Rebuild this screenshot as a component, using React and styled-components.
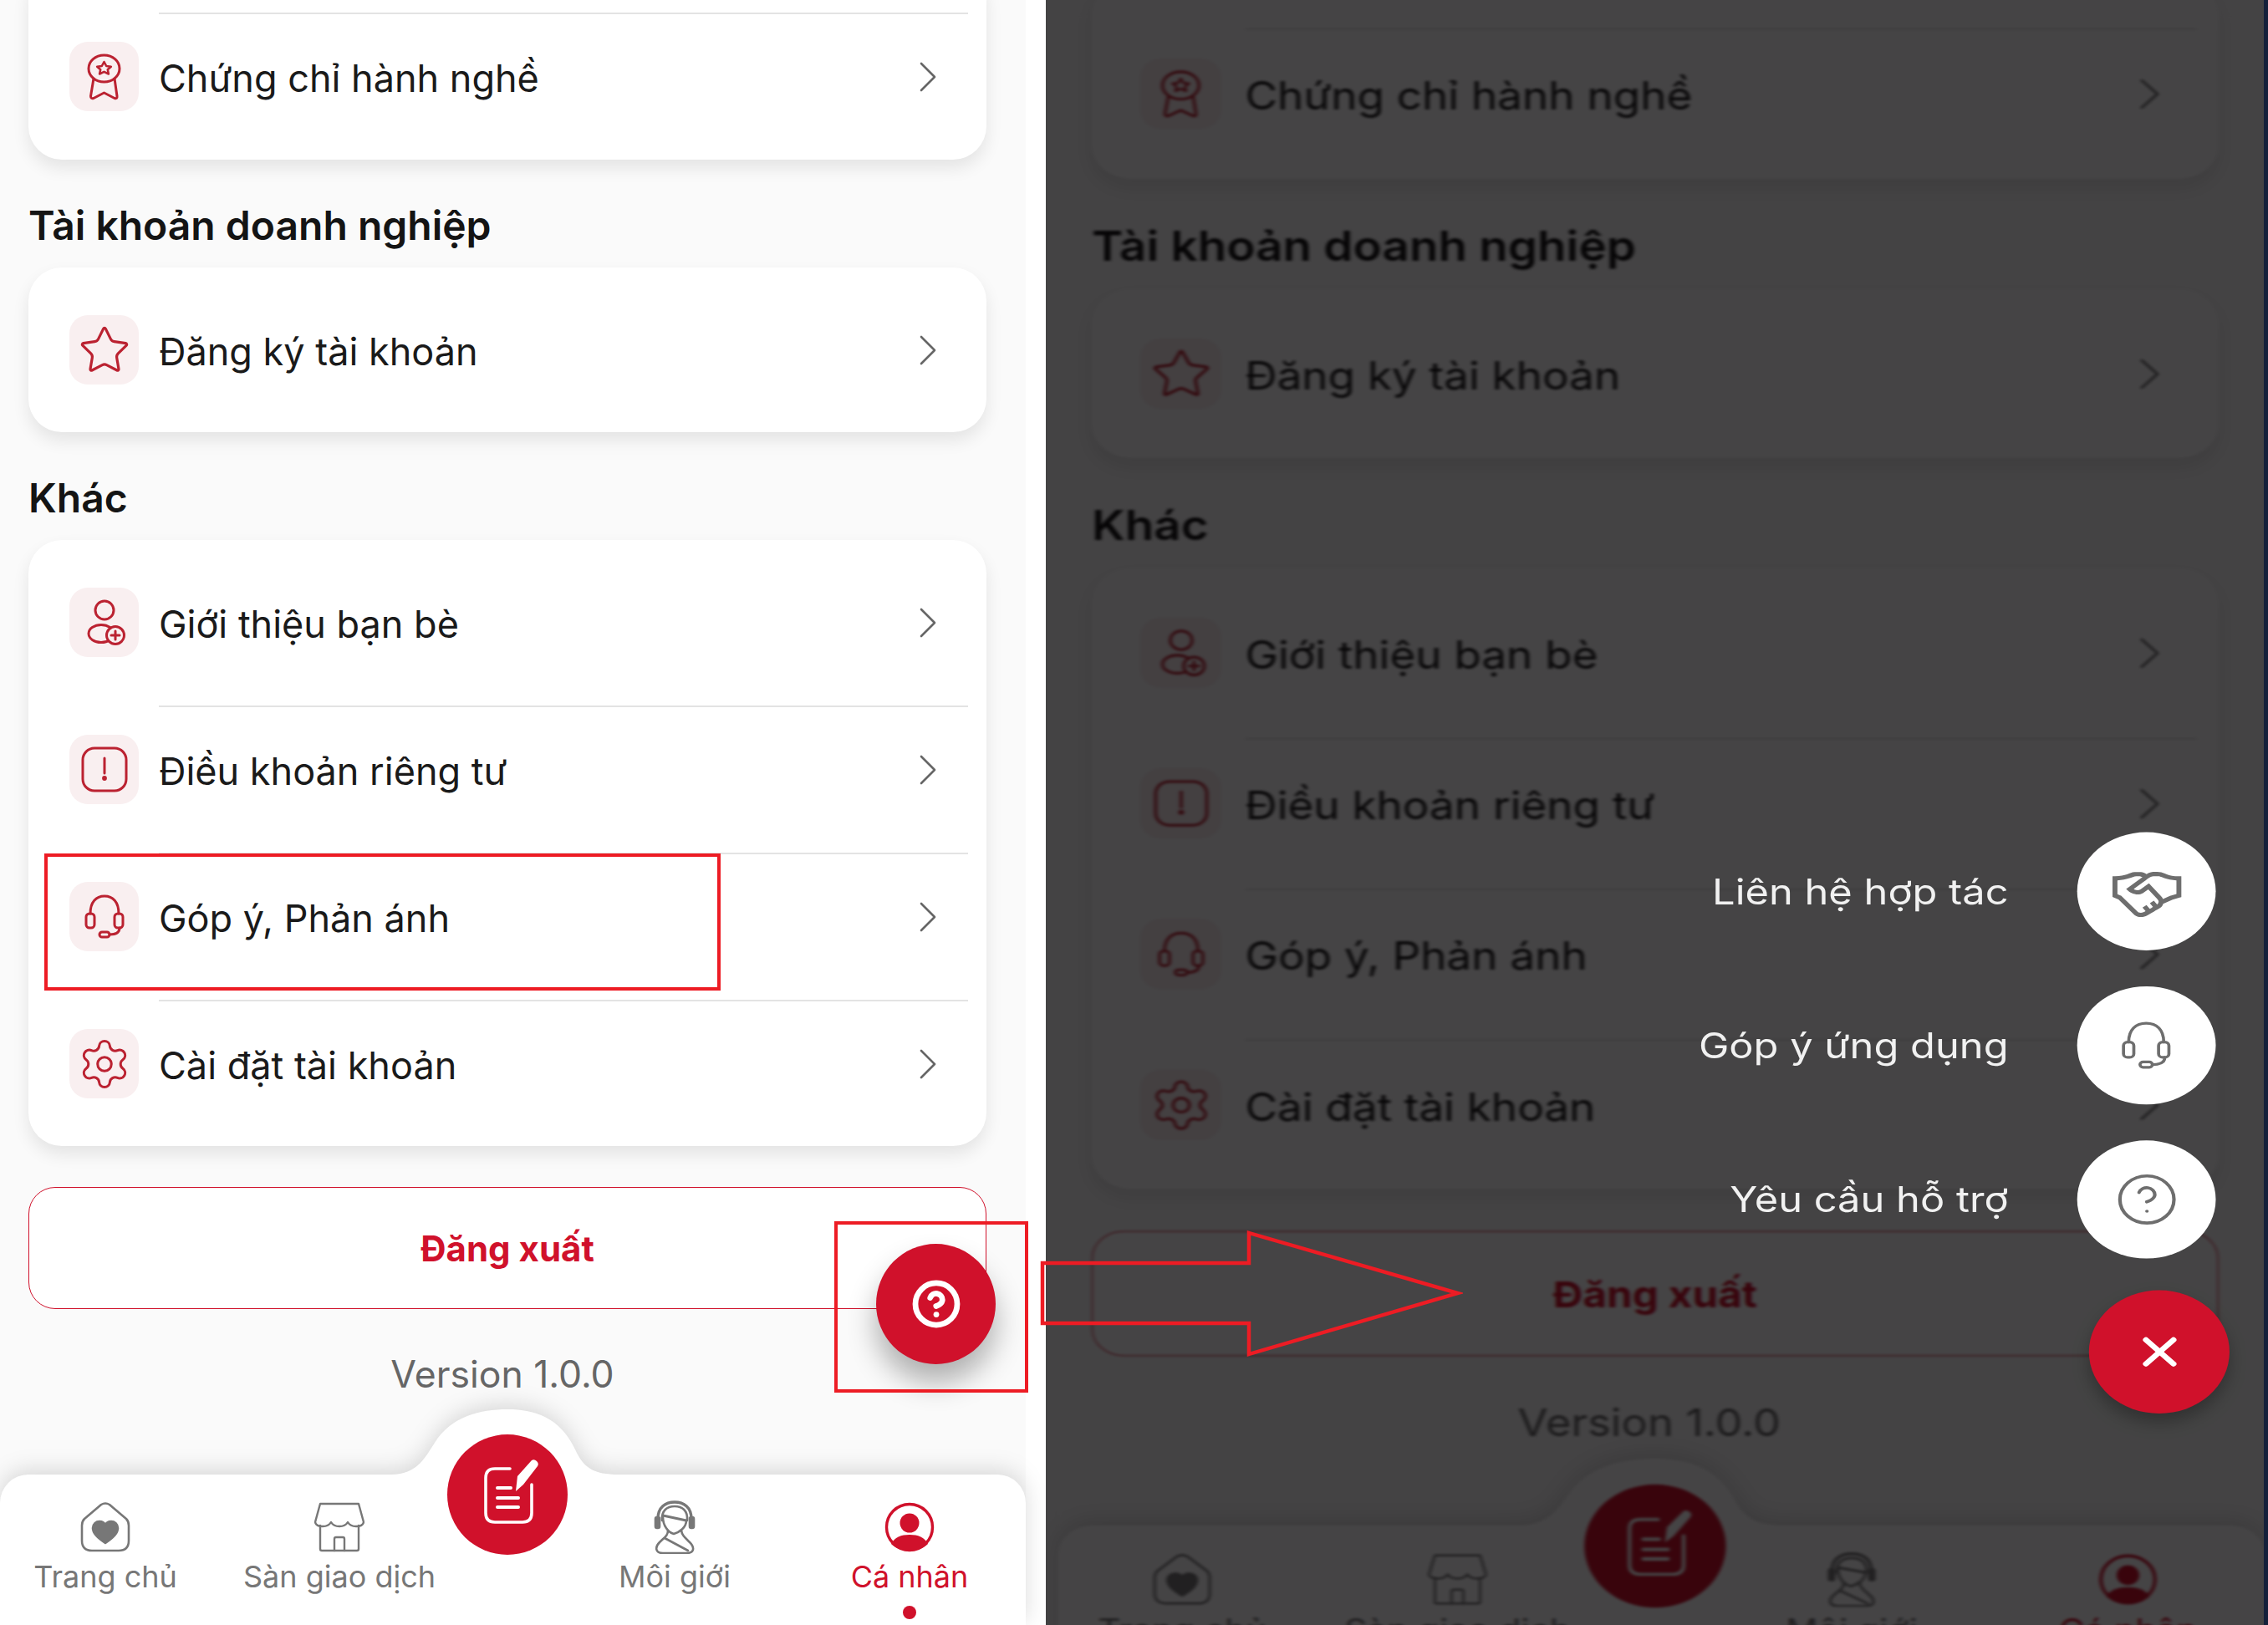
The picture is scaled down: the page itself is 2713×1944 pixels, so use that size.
import React from 'react';
import styled, { createGlobalStyle } from 'styled-components';
import { Settings, Star, CircleHelp, X } from 'lucide-react';
import { LiaHandshake } from 'react-icons/lia';

const RED = '#d0112b';
const ICON_RED = '#bb2231';
const NOTE_RED = '#ed1c24';

const GlobalStyle = createGlobalStyle`
  html, body {
    margin: 0;
    padding: 0;
    width: 2713px;
    height: 1944px;
    overflow: hidden;
    background: #fff;
    font-family: Inter, "Noto Sans", "Liberation Sans", sans-serif;
  }
`;

const Shell = styled.div`
  position: relative;
  display: flex;
  width: 2713px;
  height: 1944px;
`;

const LeftPanel = styled.div`
  width: 1251px;
  height: 1944px;
  overflow: hidden;
  background: #fff;
`;

const RightPanel = styled.div`
  position: relative;
  flex: 1;
  height: 1944px;
  overflow: hidden;
  background: #fafafa;
`;

const StretchedScreen = styled.div`
  width: 1227px;
  transform-origin: 0 0;
  transform: translate(15px, 18.3px) scale(1.176, 1.0242);
  filter: blur(1.7px);
`;

const Dim = styled.div`
  position: absolute;
  inset: 0;
  background: rgba(2, 0, 1, 0.735);
`;

const EdgeStrip = styled.div`
  position: absolute;
  top: 0;
  right: 0;
  bottom: 0;
  width: 5px;
  background: #14203a;
`;

const ScreenRoot = styled.div`
  position: relative;
  display: flex;
  flex-direction: column;
  justify-content: space-between;
  width: 1227px;
  height: 1944px;
  background: #fafafa;
`;

const Content = styled.main`
  display: flex;
  flex-direction: column;
  margin-top: -40px;
  padding: 0 47px 0 34px;
`;

const Card = styled.section`
  padding: ${({ $cut }) => ($cut ? '55px 0 58px' : '57px 0')};
  background: #fff;
  border-radius: 40px;
  box-shadow: 0 10px 20px rgba(0, 0, 0, 0.09);
`;

const Heading = styled.h2`
  margin: 50px 0 21px;
  font-size: 48px;
  line-height: 58px;
  font-weight: 600;
  color: #141414;
`;

const Row = styled.div`
  display: flex;
  align-items: center;
  padding: 0 60px 0 49px;
`;

const IconBox = styled.div`
  display: flex;
  align-items: center;
  justify-content: center;
  flex: none;
  width: 83px;
  height: 83px;
  border-radius: 22px;
  background: #f9eff0;
  color: ${ICON_RED};
`;

const RowLabel = styled.span`
  flex: 1;
  margin-left: 24px;
  padding-top: 4px;
  font-size: 45px;
  line-height: 56px;
  color: #1a1a1a;
`;

const Divider = styled.div`
  height: 2px;
  margin: 58px 22px 33px 156px;
  background: #e3e3e3;
`;

const TopDivider = styled(Divider)`
  margin-top: 0;
`;

const LogoutButton = styled.div`
  display: flex;
  align-items: center;
  justify-content: center;
  height: 146px;
  margin-top: 49px;
  border: 1.5px solid ${RED};
  border-radius: 32px;
  box-sizing: border-box;
  background: #fff;
  font-size: 42px;
  font-weight: 700;
  color: ${RED};
`;

const Version = styled.div`
  margin-top: 50px;
  padding-right: 12px;
  text-align: center;
  font-size: 44.5px;
  line-height: 56px;
  color: #666;
`;

const NavWrap = styled.div`
  position: relative;
  filter: drop-shadow(0 -5px 13px rgba(0, 0, 0, 0.14));
`;

const NavBump = styled.svg`
  position: absolute;
  left: 460px;
  top: -78px;
`;

const Nav = styled.nav`
  display: grid;
  grid-template-columns: 252px 308px 94px 306px 256px;
  height: 180px;
  padding-top: 33px;
  box-sizing: border-box;
  background: #fff;
  border-radius: 34px 34px 0 0;
`;

const Tab = styled.div`
  position: relative;
  display: flex;
  flex-direction: column;
  align-items: center;
  color: ${({ $active }) => ($active ? RED : '#777')};
`;

const TabIcon = styled.div`
  display: flex;
  align-items: center;
  justify-content: center;
  height: 60px;
`;

const TabLabel = styled.span`
  margin-top: 6px;
  font-size: 36px;
  line-height: 46px;
  white-space: nowrap;
`;

const ActiveDot = styled.span`
  width: 16px;
  height: 16px;
  margin-top: 12px;
  border-radius: 50%;
  background: ${RED};
`;

const CenterButton = styled.div`
  position: absolute;
  left: 535px;
  top: -48px;
  width: 144px;
  height: 144px;
  border-radius: 50%;
  background: ${RED};
`;

const HelpFab = styled.div`
  position: absolute;
  right: 36px;
  top: 1488px;
  display: flex;
  align-items: center;
  justify-content: center;
  width: 143px;
  height: 144px;
  border-radius: 50%;
  background: ${RED};
  color: #fff;
  box-shadow: 0 22px 34px rgba(0, 0, 0, 0.3);
`;

const MenuColumn = styled.div`
  position: absolute;
  right: 46px;
  bottom: 253px;
  display: flex;
  flex-direction: column;
  align-items: flex-end;
  transform-origin: 100% 100%;
  transform: scale(1.176, 1.0242);
`;

const MenuRow = styled.div`
  display: flex;
  align-items: center;
  gap: 70px;
  margin-bottom: 42px;
  padding-right: 14px;
  filter: blur(0.6px);
  &:nth-child(3) {
    margin-bottom: 37px;
  }
`;

const MenuLabel = styled.span`
  font-size: 41.5px;
  line-height: 46px;
  color: #f1f1f1;
  white-space: nowrap;
`;

const MenuCircle = styled.div`
  display: flex;
  align-items: center;
  justify-content: center;
  width: 141px;
  height: 138px;
  border-radius: 50%;
  background: #fff;
  color: #6e6e6e;
`;

const CloseFab = styled.div`
  display: flex;
  align-items: center;
  justify-content: center;
  width: 143px;
  height: 144px;
  border-radius: 50%;
  background: ${RED};
  color: #fff;
  box-shadow: 0 10px 18px rgba(0, 0, 0, 0.28);
`;

const Frame = styled.div`
  position: absolute;
  box-sizing: border-box;
  border: 4.5px solid ${NOTE_RED};
  pointer-events: none;
`;

const FeedbackFrame = styled(Frame)`
  left: 53px;
  top: 1021px;
  width: 809px;
  height: 164px;
`;

const QuestionFrame = styled(Frame)`
  left: 998px;
  top: 1461px;
  width: 232px;
  height: 205px;
`;

const ArrowMark = styled.svg`
  position: absolute;
  left: 1240px;
  top: 1468px;
`;

const IconSvg = styled.svg`
  display: block;
  flex: none;
  fill: none;
  stroke: currentColor;
  stroke-linecap: round;
  stroke-linejoin: round;
`;

const Chevron = () => (
  <IconSvg width="20" height="36" viewBox="0 0 20 36" strokeWidth="2.6" style={{ color: '#666' }}>
    <path d="M2 2 L18 18 L2 34" />
  </IconSvg>
);

const CertificateIcon = () => (
  <IconSvg width="83" height="83" viewBox="0 0 83 83" strokeWidth="3">
    <ellipse cx="41.5" cy="32" rx="18.5" ry="16" />
    <path d="M41.5 24 l2.7 5 5.6.7-4 3.6 1.1 5.2-5.4-2.7-5.4 2.7 1.1-5.2-4-3.6 5.6-.7z" strokeWidth="2.6" />
    <path d="M29 44 L25.5 65 Q25.5 68.5 29 67.5 L41.5 61 L54 67.5 Q57.5 68.5 57 65 L54 44" />
  </IconSvg>
);

const UserPlusIcon = () => (
  <IconSvg width="83" height="83" viewBox="0 0 83 83" strokeWidth="3">
    <ellipse cx="42" cy="27" rx="11" ry="11" />
    <ellipse cx="38" cy="55" rx="15" ry="10.5" />
    <circle cx="55" cy="57" r="10.5" fill="#f9eff0" />
    <path d="M55 52 v10 M50 57 h10" />
  </IconSvg>
);

const AlertIcon = () => (
  <IconSvg width="83" height="83" viewBox="0 0 83 83" strokeWidth="3">
    <rect x="16" y="16" width="52" height="51" rx="14" />
    <path d="M42 28 V46" />
    <circle cx="42" cy="52" r="1.4" fill="currentColor" />
  </IconSvg>
);

const HeadsetIcon = ({ scale = 1 }) => (
  <IconSvg width={50 * scale} height={56 * scale} viewBox="17 14 50 56" strokeWidth="3">
    <path d="M25 38 C25 24 32 17 42 17 C52 17 59 24 59 38" />
    <rect x="20" y="38" width="10" height="17" rx="4" />
    <rect x="54" y="38" width="10" height="17" rx="4" />
    <path d="M60 55 C60 60 56 63 48 63" />
    <rect x="36" y="60" width="12" height="6" rx="3" />
  </IconSvg>
);

const StoreIcon = () => (
  <IconSvg width="60" height="60" viewBox="0 0 60 60" strokeWidth="2.4">
    <path d="M7 2 H53 L59 24 Q58 29 50 29 Q43 29 40 24 Q37 29 30 29 Q23 29 20 24 Q17 29 10 29 Q2 29 1 24 Z" />
    <path d="M7 28 V56 Q7 58 9 58 H51 Q53 58 53 56 V28" />
    <path d="M24 58 V44 Q24 42 26 42 H34 Q36 42 36 44 V58" />
  </IconSvg>
);

const HomeIcon = () => (
  <IconSvg width="60" height="60" viewBox="0 0 60 60" strokeWidth="2.6">
    <path d="M25 3 Q30 0 35 3 L55 20 Q58 23 58 28 V46 Q58 58 46 58 H14 Q2 58 2 46 V28 Q2 23 5 20 Z" />
    <path
      d="M30 49 C20 42 15 37 15 31 C15 26 19 23 23 23 C26 23 29 25 30 27 C31 25 34 23 37 23 C41 23 45 26 45 31 C45 37 40 42 30 49 Z"
      fill="currentColor"
    />
  </IconSvg>
);

const BrokerIcon = () => (
  <IconSvg width="52" height="64" viewBox="0 0 52 64" strokeWidth="2.6">
    <path d="M6 22 C6 8 15 2 26 2 C37 2 46 8 46 22" strokeWidth="3.4" />
    <path d="M11 24 C10 12 17 7 26 7 C35 7 42 12 41 24" />
    <rect x="3" y="20" width="5" height="13" rx="2" fill="currentColor" />
    <rect x="44" y="20" width="5" height="13" rx="2" fill="currentColor" />
    <path d="M12 18 L40 24" strokeWidth="3" />
    <path d="M12 20 C12 30 18 38 25 40 C32 38 40 32 40 24" />
    <path d="M18 36 C18 42 14 44 8 50 C2 56 3 63 12 63 H40 C50 63 50 56 44 50 C38 44 35 42 34 36" />
    <path d="M14 45 L42 60" />
  </IconSvg>
);

const ProfileIcon = () => (
  <IconSvg width="60" height="60" viewBox="0 0 60 60" strokeWidth="3.4">
    <circle cx="30" cy="30" r="27.5" />
    <circle cx="30" cy="25" r="11.5" fill="currentColor" stroke="none" />
    <path d="M8 50 C12 42 20 39 30 39 C40 39 48 42 52 50 C46 56 38 58 30 58 C22 58 14 56 8 50 Z" fill="currentColor" stroke="none" />
  </IconSvg>
);

const NoteIcon = () => (
  <IconSvg width="144" height="144" viewBox="0 0 144 144" strokeWidth="3.6" style={{ color: '#fff' }}>
    <path d="M75 41 H57 Q46 41 46 52 V94 Q46 105 57 105 H90 Q101 105 101 94 V60" />
    <path d="M60 64 H76 M60 76 H85 M60 87 H85" strokeWidth="4" />
    <path d="M82 68 L84 50 L101 31 Q104 29 107 32 Q110 35 108 38 L91 60 Z" fill="#fff" stroke="none" />
  </IconSvg>
);

const accountRows = [
  { label: 'Giới thiệu bạn bè', icon: <UserPlusIcon /> },
  { label: 'Điều khoản riêng tư', icon: <AlertIcon /> },
  { label: 'Góp ý, Phản ánh', icon: <HeadsetIcon /> },
  { label: 'Cài đặt tài khoản', icon: <Settings size={66} strokeWidth={1.1} /> },
];

const tabs = [
  { label: 'Trang chủ', icon: <HomeIcon /> },
  { label: 'Sàn giao dịch', icon: <StoreIcon /> },
  null,
  { label: 'Môi giới', icon: <BrokerIcon /> },
  { label: 'Cá nhân', icon: <ProfileIcon />, active: true },
];

const menuItems = [
  { label: 'Liên hệ hợp tác', icon: <LiaHandshake size={80} /> },
  { label: 'Góp ý ứng dụng', icon: <HeadsetIcon scale={1.05} /> },
  { label: 'Yêu cầu hỗ trợ', icon: <CircleHelp size={66} strokeWidth={1.3} /> },
];

const MenuItemRow = ({ icon, label }) => (
  <Row>
    <IconBox>{icon}</IconBox>
    <RowLabel>{label}</RowLabel>
    <Chevron />
  </Row>
);

const BottomNav = () => (
  <NavWrap>
    <NavBump width="300" height="80" viewBox="0 0 300 80">
      <path
        d="M0 80 V78 H8 C40 78 50 55 60 40 C80 8 115 0 147 0 C180 0 210 10 228 48 C238 70 250 78 280 78 H300 V80 Z"
        fill="#fff"
      />
    </NavBump>
    <Nav>
      {tabs.map((tab, i) =>
        tab ? (
          <Tab key={tab.label} $active={tab.active}>
            <TabIcon>{tab.icon}</TabIcon>
            <TabLabel>{tab.label}</TabLabel>
            {tab.active && <ActiveDot />}
          </Tab>
        ) : (
          <span key={i} />
        ),
      )}
    </Nav>
    <CenterButton>
      <NoteIcon />
    </CenterButton>
  </NavWrap>
);

const Screen = ({ withFab }) => (
  <ScreenRoot>
    <Content>
      <Card $cut>
        <TopDivider />
        <MenuItemRow icon={<CertificateIcon />} label="Chứng chỉ hành nghề" />
      </Card>
      <Heading>Tài khoản doanh nghiệp</Heading>
      <Card>
        <MenuItemRow icon={<Star size={64} strokeWidth={1.2} />} label="Đăng ký tài khoản" />
      </Card>
      <Heading>Khác</Heading>
      <Card>
        {accountRows.map((row, i) => (
          <React.Fragment key={row.label}>
            {i > 0 && <Divider />}
            <MenuItemRow icon={row.icon} label={row.label} />
          </React.Fragment>
        ))}
      </Card>
      <LogoutButton>Đăng xuất</LogoutButton>
      <Version>Version 1.0.0</Version>
    </Content>
    <BottomNav />
    {withFab && (
      <HelpFab>
        <CircleHelp size={60} strokeWidth={2.7} />
      </HelpFab>
    )}
  </ScreenRoot>
);

export default function App() {
  return (
    <>
      <GlobalStyle />
      <Shell>
        <LeftPanel>
          <Screen withFab />
        </LeftPanel>
        <RightPanel>
          <StretchedScreen>
            <Screen />
          </StretchedScreen>
          <Dim />
          <EdgeStrip />
          <MenuColumn>
            {menuItems.map((item) => (
              <MenuRow key={item.label}>
                <MenuLabel>{item.label}</MenuLabel>
                <MenuCircle>{item.icon}</MenuCircle>
              </MenuRow>
            ))}
            <CloseFab>
              <X size={56} strokeWidth={2.6} />
            </CloseFab>
          </MenuColumn>
        </RightPanel>
        <FeedbackFrame />
        <QuestionFrame />
        <ArrowMark width="510" height="156" viewBox="0 0 510 156" fill="none" stroke={NOTE_RED} strokeWidth="4.5">
          <path d="M7 43 H254 V7 L504 79 L254 152 V115 H7 Z" />
        </ArrowMark>
      </Shell>
    </>
  );
}
